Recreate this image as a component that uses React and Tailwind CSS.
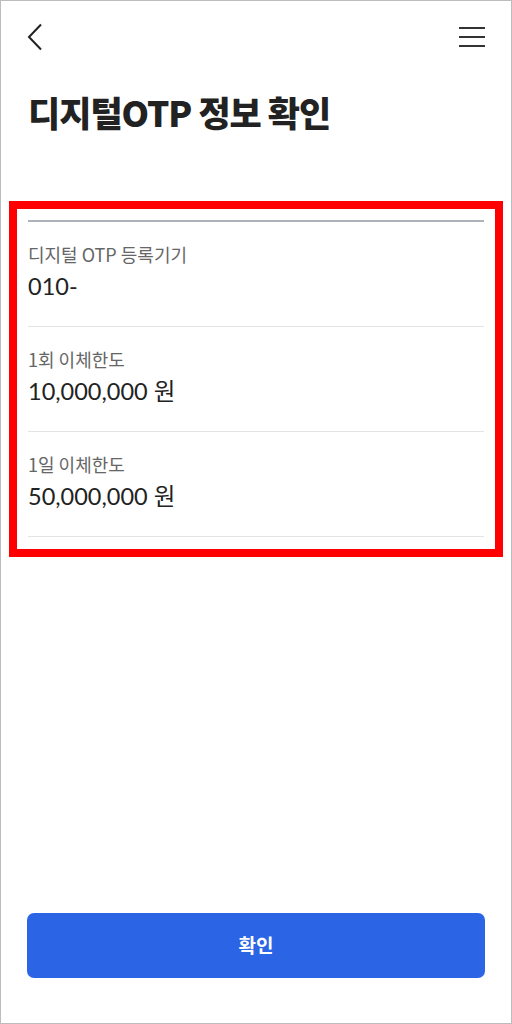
import React from "react";

const rows = [
  { label: "디지털 OTP 등록기기", value: "010-" },
  { label: "1회 이체한도", value: "10,000,000 원" },
  { label: "1일 이체한도", value: "50,000,000 원" },
];

export default function App() {
  return (
    <div
      className="relative flex h-[1024px] w-[512px] flex-col border border-[#bdbdbd] bg-white text-[#222]"
      style={{ fontFamily: 'Lato, "Noto Sans CJK KR", sans-serif' }}
    >
      {/* 상단 바 */}
      <div className="flex h-[74px] items-center justify-between px-[26px] pb-[2px]">
        <button className="flex h-8 w-8 items-center justify-start">
          <svg width="16" height="28" viewBox="0 0 16 28" fill="none">
            <path d="M14 1.5 2 14l12 12.5" stroke="#222" strokeWidth="2" />
          </svg>
        </button>
        <button className="flex h-8 w-8 items-center justify-end">
          <svg width="26" height="22" viewBox="0 0 26 22" fill="none">
            <path d="M0 2h26M0 11h26M0 20h26" stroke="#333" strokeWidth="2" />
          </svg>
        </button>
      </div>

      {/* 제목 */}
      <h1
        className="px-[27px] pt-[14px] text-[35px] font-black leading-[46px] tracking-[-1px] text-[#222]"
        style={{ fontFamily: '"Noto Sans CJK KR", sans-serif' }}
      >
        디지털OTP 정보 확인
      </h1>

      {/* 정보 목록 */}
      <div className="mx-[8px] mt-[66px] border-[8px] border-[#ff0000] px-[11px] pb-[12px] pt-[11px]">
        <div className="border-t-2 border-[#adb2b9]">
          {rows.map((r, i) => (
            <div key={i} className="border-b border-[#e3e3e3] pb-[26px] pt-[20px]">
              <p
                className="text-[18px] leading-[24px] text-[#666]"
                style={{ fontFamily: '"Noto Sans CJK KR", sans-serif' }}
              >
                {r.label}
              </p>
              <p className="mt-[6px] text-[23.5px] leading-[28px] text-[#222]">{r.value}</p>
            </div>
          ))}
        </div>
      </div>

      {/* 확인 버튼 */}
      <div className="mt-auto px-[26px] pb-[45px]">
        <button
          className="h-[65px] w-full rounded-[7px] bg-[#2b65e5] text-[19px] font-bold text-white"
          style={{ fontFamily: '"Noto Sans CJK KR", sans-serif' }}
        >
          확인
        </button>
      </div>
    </div>
  );
}
